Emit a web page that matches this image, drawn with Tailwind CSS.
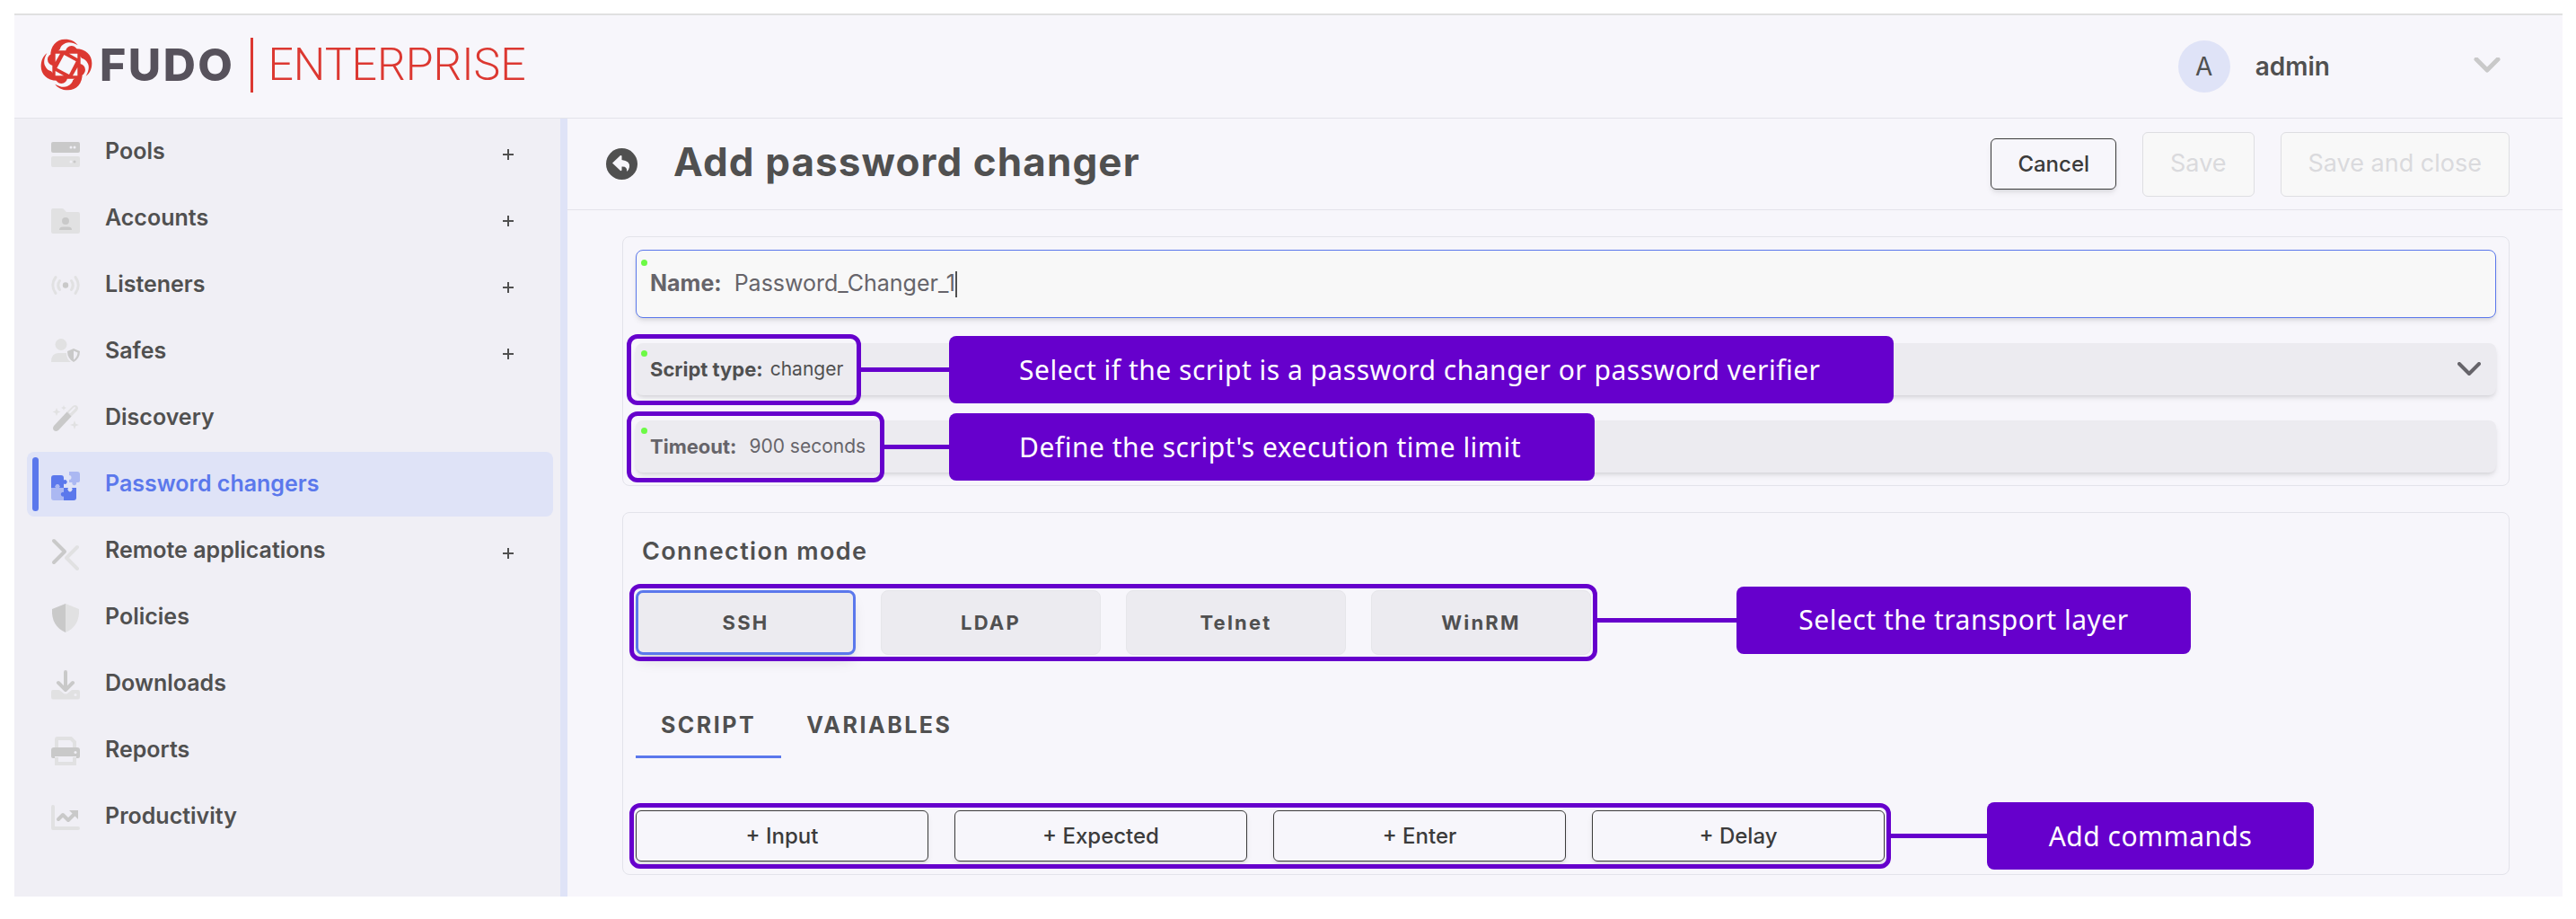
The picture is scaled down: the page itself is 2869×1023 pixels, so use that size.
<!DOCTYPE html>
<html lang="en">
<head>
  <meta charset="UTF-8">
  <meta name="viewport" content="width=device-width, initial-scale=1.0">
  <title>Add password changer</title>
  <script src="https://cdn.jsdelivr.net/npm/@tailwindcss/browser@4"></script>
</head>
<body class="bg-white px-4 pt-[15px] pr-[15px] font-['Inter','Liberation_Sans',sans-serif] text-[#505050]">

  <div class="flex flex-col border-t-2 border-[#e0e0e0] bg-[#f7f6fb]">

    <!-- Top bar -->
    <header class="flex h-[115px] items-center justify-between border-b border-[#e3e3ea] pr-[69px] pl-[29px]">
      <a href="#" class="flex items-center pb-1">
        <svg class="h-[58px] w-[58px]" viewBox="14 18 174 174" fill="#dc3831">
          <g id="petal">
            <path d="M48 78C46 42 68 20 96 20C116 20 131 28 139 40C124 31 109 28 98 33C86 38 81 46 79 54L60 70Z"/>
            <circle cx="118" cy="62" r="20"/>
          </g>
          <use href="#petal" transform="rotate(90 101 105)"/>
          <use href="#petal" transform="rotate(180 101 105)"/>
          <use href="#petal" transform="rotate(270 101 105)"/>
          <rect x="54" y="58" width="94" height="94" rx="18"/>
          <g fill="#f7f6fb">
            <path d="M93 72L133 94L110 138L69 116Z"/>
            <path d="M64 68H80L64 96Z"/>
            <path d="M138 68V84L110 68Z"/>
            <path d="M138 142H122L138 114Z"/>
            <path d="M64 142V126L92 142Z"/>
          </g>
        </svg>
        <span class="ml-2 text-[50px] leading-none font-extrabold tracking-wider text-[#57525c]">FUDO</span>
        <span class="ml-[18px] h-[61px] w-[3px] bg-[#dc3831]"></span>
        <span class="ml-4 font-['Roboto'] text-[50px] leading-none font-light text-[#dc3831]">ENTERPRISE</span>
      </a>
      <button type="button" class="flex items-center">
        <span class="flex h-[58px] w-[58px] items-center justify-center rounded-full bg-[#dfe3f7] text-[28px]">A</span>
        <span class="ml-7 text-[28px] font-semibold">admin</span>
        <svg class="ml-40 h-5 w-[30px]" viewBox="0 0 30 20" fill="none" stroke="#c9c9c9" stroke-width="5" stroke-linecap="round" stroke-linejoin="round"><path d="M3 2L15 14L27 2"/></svg>
      </button>
    </header>

    <div class="flex">
      <!-- Sidebar -->
      <nav class="flex w-[616px] shrink-0 flex-col gap-0.5 border-r-8 border-[#dfe3f7] bg-[#f0eff5] pt-px pr-2 pb-[52px] pl-3.5 text-[25px] font-semibold">
        <a href="#" class="flex h-[72px] items-center rounded-lg pr-11 pl-[27px]">
          <svg class="h-9 w-8 overflow-visible" viewBox="0 0 32 36"><rect y="7" width="32" height="12" rx="2" fill="#c9c9c9"/><rect y="23" width="32" height="12" rx="2" fill="#e1e1e2"/><g fill="#f0eff5"><circle cx="22" cy="13" r="1.5"/><circle cx="26" cy="13" r="1.5"/><circle cx="22" cy="29" r="1.5"/></g><circle cx="26" cy="29" r="1.5" fill="#c9c9c9"/></svg>
          <span class="ml-7">Pools</span>
          <svg class="mt-1.5 ml-auto h-3 w-3" viewBox="0 0 12 12" stroke="#505050" stroke-width="2"><path d="M6 0V12M0 6H12"/></svg>
        </a>
        <a href="#" class="flex h-[72px] items-center rounded-lg pr-11 pl-[27px]">
          <svg class="h-9 w-8 overflow-visible" viewBox="0 0 32 36"><path d="M2 7H12Q14 7 15 9L17 11H30Q32 11 32 13V33Q32 35 30 35H2Q0 35 0 33V9Q0 7 2 7Z" fill="#e1e1e2"/><circle cx="16" cy="21" r="4" fill="#c9c9c9"/><path d="M9 31Q9 27.500 13 27.500H19Q23 27.500 23 31Z" fill="#c9c9c9"/></svg>
          <span class="ml-7">Accounts</span>
          <svg class="mt-1.5 ml-auto h-3 w-3" viewBox="0 0 12 12" stroke="#505050" stroke-width="2"><path d="M6 0V12M0 6H12"/></svg>
        </a>
        <a href="#" class="flex h-[72px] items-center rounded-lg pr-11 pl-[27px]">
          <svg class="h-9 w-8 overflow-visible" viewBox="0 0 32 36" fill="none" stroke="#e1e1e2" stroke-width="3" stroke-linecap="round"><path d="M5 9.500Q-1.500 18.500 5 27.500M27 9.500Q33.500 18.500 27 27.500M9.500 13.500Q6 18.500 9.500 23.500M22.500 13.500Q26 18.500 22.500 23.500"/><circle cx="16" cy="18.500" r="3.200" fill="#c9c9c9" stroke="none"/></svg>
          <span class="ml-7">Listeners</span>
          <svg class="mt-1.5 ml-auto h-3 w-3" viewBox="0 0 12 12" stroke="#505050" stroke-width="2"><path d="M6 0V12M0 6H12"/></svg>
        </a>
        <a href="#" class="flex h-[72px] items-center rounded-lg pr-11 pl-[27px]">
          <svg class="h-9 w-8 overflow-visible" viewBox="0 0 32 36"><circle cx="11" cy="10.500" r="6.500" fill="#e1e1e2"/><path d="M0 30Q0 20 8 20H17Q17 27 22 30Z" fill="#e1e1e2"/><path d="M25 15L32 18Q32 26 25 30Q18 26 18 18Z" fill="#c9c9c9"/><path d="M25 17.500L29.500 19.500Q29 25 25 27.500Z" fill="#f0eff5"/></svg>
          <span class="ml-7">Safes</span>
          <svg class="mt-1.5 ml-auto h-3 w-3" viewBox="0 0 12 12" stroke="#505050" stroke-width="2"><path d="M6 0V12M0 6H12"/></svg>
        </a>
        <a href="#" class="flex h-[72px] items-center rounded-lg pr-11 pl-[27px]">
          <svg class="h-9 w-8 overflow-visible" viewBox="0 0 32 36"><path d="M17 12L24 5Q27 3 29 5Q31 7 29 10L22 17L17 20Z" fill="#e1e1e2"/><path d="M21 12L26 7" stroke="#f0eff5" stroke-width="2" stroke-linecap="round"/><path d="M17.500 11.500L22.500 16.500L8 32Q5 34 3 32Q1 30 3 27Z" fill="#c9c9c9"/><path d="M6 7L7.300 10.200L10.500 11.500L7.300 12.800L6 16L4.700 12.800L1.500 11.500L4.700 10.200ZM14 4L14.800 6L17 7L14.800 8L14 10L13.200 8L11 7L13.200 6ZM26 21L27.300 24.700L31 26L27.300 27.300L26 31L24.700 27.300L21 26L24.700 24.700Z" fill="#e1e1e2"/></svg>
          <span class="ml-7">Discovery</span>
        </a>
        <a href="#" class="relative flex h-[72px] items-center rounded-lg bg-[#dfe3f7] pr-11 pl-[27px] text-[#5b78ec]">
          <span class="absolute inset-y-1.5 left-1.5 w-[7px] rounded-full bg-[#5b78ec]"></span>
          <svg class="h-9 w-8 overflow-visible" viewBox="0 0 32 36"><path d="M2 22H14V36H3Q0 36 0 33V22Z" fill="#abb8f2"/><path d="M3 8H11Q14 8 14 11V13.500A2.400 2.400 0 1 1 14 17.500V22H9A2.400 2.400 0 1 0 5 22H0V11Q0 8 3 8Z" fill="#5b78ec"/><path d="M5 22A2.400 2.400 0 1 1 9 22Z" fill="#abb8f2"/><path d="M14 22H19A2.600 2.600 0 1 0 23 22H28V33Q28 36 25 36H14V31.500A2.400 2.400 0 1 1 14 27Z" fill="#5b78ec"/><path d="M20 4H29Q32 4 32 7V14Q32 16 30 16H28A2.400 2.400 0 1 1 23.500 16H20V13A2.400 2.400 0 1 0 20 8Z" fill="#abb8f2"/></svg>
          <span class="ml-7">Password changers</span>
        </a>
        <a href="#" class="flex h-[72px] items-center rounded-lg pr-11 pl-[27px]">
          <svg class="h-9 w-8 overflow-visible" viewBox="0 0 32 36" fill="none" stroke-width="4" stroke-linecap="round" stroke-linejoin="round"><path d="M29 14L17 26L29 38" stroke="#e1e1e2"/><path d="M3 7L15 19L3 31" stroke="#c9c9c9"/></svg>
          <span class="ml-7">Remote applications</span>
          <svg class="mt-1.5 ml-auto h-3 w-3" viewBox="0 0 12 12" stroke="#505050" stroke-width="2"><path d="M6 0V12M0 6H12"/></svg>
        </a>
        <a href="#" class="flex h-[72px] items-center rounded-lg pr-11 pl-[27px]">
          <svg class="h-9 w-8 overflow-visible" viewBox="0 0 32 36"><path d="M16 3L1 9Q0 28 16 35Z" fill="#c9c9c9"/><path d="M16 3L31 9Q32 28 16 35Z" fill="#e1e1e2"/></svg>
          <span class="ml-7">Policies</span>
        </a>
        <a href="#" class="flex h-[72px] items-center rounded-lg pr-11 pl-[27px]">
          <svg class="h-9 w-8 overflow-visible" viewBox="0 0 32 36"><path d="M2 25H9L14 29Q16 30 18 29L23 25H30Q32 25 32 27V33Q32 35.500 30 35.500H2Q0 35.500 0 33V27Q0 25 2 25Z" fill="#e1e1e2"/><circle cx="27" cy="30.500" r="1.500" fill="#f0eff5"/><path d="M16 5V24M8 17L16 25L24 17" fill="none" stroke="#c9c9c9" stroke-width="4" stroke-linecap="round" stroke-linejoin="round"/></svg>
          <span class="ml-7">Downloads</span>
        </a>
        <a href="#" class="flex h-[72px] items-center rounded-lg pr-11 pl-[27px]">
          <svg class="h-9 w-8 overflow-visible" viewBox="0 0 32 36"><path d="M6 16V6Q6 5 7 5H22L26 9V16M6 26V33H26V26" fill="none" stroke="#e1e1e2" stroke-width="4"/><path d="M3 15H29Q32 15 32 18V25Q32 27 30 27H28V25H4V27H2Q0 27 0 25V18Q0 15 3 15Z" fill="#c9c9c9"/><circle cx="27" cy="20.500" r="1.500" fill="#f0eff5"/></svg>
          <span class="ml-7">Reports</span>
        </a>
        <a href="#" class="flex h-[72px] items-center rounded-lg pr-11 pl-[27px]">
          <svg class="h-9 w-8 overflow-visible" viewBox="0 0 32 36" fill="none" stroke-width="4" stroke-linecap="round" stroke-linejoin="round"><path d="M2 7V31H30" stroke="#e1e1e2"/><path d="M8 21L13 16L19 22L26 15" stroke="#c9c9c9"/><path d="M20 11H30V21Z" fill="#c9c9c9"/></svg>
          <span class="ml-7">Productivity</span>
        </a>
      </nav>

      <main class="min-w-0 flex-1">
        <!-- Page title and actions -->
        <div class="flex h-[102px] items-center border-b border-[#e3e3ea] pr-[59px] pl-[43px]">
          <button type="button" aria-label="Back">
            <svg class="h-[35px] w-[35px]" viewBox="0 0 35 35"><circle cx="17.500" cy="17.500" r="17.500" fill="#505050"/><path d="M7 16.500L16 8Q17.500 7.500 17.500 9V13Q27 14 26 21Q25.500 24 23 26Q24 20 17.500 20.500V24Q17.500 25.500 16 25Z" fill="#f7f6fb"/></svg>
          </button>
          <h1 class="ml-10 pb-1.5 text-[44px] font-bold tracking-wide">Add password changer</h1>
          <div class="ml-auto flex items-center gap-[29px]">
            <button type="button" class="h-[57px] rounded-md border border-[#3b3b3b] px-[29px] text-2xl font-medium text-[#3b3b3b] shadow-md">Cancel</button>
            <button type="button" disabled class="h-[72px] rounded-md border border-[#dedee2] bg-[#f8f8f8] px-[30px] text-[27px] text-[#dadadd]">Save</button>
            <button type="button" disabled class="h-[72px] rounded-md border border-[#dedee2] bg-[#f8f8f8] px-[30px] text-[27px] text-[#dadadd]">Save and close</button>
          </div>
        </div>

        <div class="flex flex-col gap-[29px] pt-[29px] pr-[59px] pb-6 pl-[61px]">

          <!-- General settings -->
          <section class="flex flex-col gap-7 rounded-lg border border-[#e3e3ea] p-3.5">
            <div class="relative flex h-[76px] items-center rounded-lg border border-[#5b78ec] bg-[#f8f8f8] px-[15px] text-[25px] text-[#66646a] shadow-md">
              <span class="absolute top-2.5 left-[5px] h-[7px] w-[7px] rounded-full bg-[#6cfa45]"></span>
              <label for="name" class="font-bold">Name:</label>
              <input id="name" type="text" value="Password_Changer_1" class="ml-3.5 field-sizing-content outline-none">
              <span class="h-[29px] w-0.5 bg-[#505050]"></span>
            </div>

            <div class="relative flex h-[58px] items-center rounded-lg bg-[#ecebf0] px-4 text-[22px] shadow-md">
              <span class="absolute top-2 left-1.5 h-[7px] w-[7px] rounded-full bg-[#6cfa45]"></span>
              <label for="script-type" class="font-bold">Script type:</label>
              <select id="script-type" class="ml-2 flex-1 appearance-none text-[21px] outline-none">
                <option>changer</option>
                <option>verifier</option>
              </select>
              <svg class="mr-px h-4 w-[26px]" viewBox="0 0 26 16" fill="none" stroke="#66646a" stroke-width="4" stroke-linecap="round" stroke-linejoin="round"><path d="M2 2L13 13L24 2"/></svg>
              <div class="absolute -top-2.5 -left-2.5 flex items-center">
                <span class="h-[79px] w-[261px] rounded-xl border-5 border-[#6600cc]"></span>
                <span class="h-[5px] w-[98px] bg-[#6600cc]"></span>
                <span class="flex h-[75px] w-[1052px] items-center rounded-lg bg-[#6600cc] pl-[78px] font-['Noto_Sans'] text-3xl tracking-[0.5px] text-white">Select if the script is a password changer or password verifier</span>
              </div>
            </div>

            <div class="relative flex h-[58px] items-center rounded-lg bg-[#ecebf0] px-4 text-[22px] text-[#66646a] shadow-md">
              <span class="absolute top-2 left-1.5 h-[7px] w-[7px] rounded-full bg-[#6cfa45]"></span>
              <label for="timeout" class="font-bold">Timeout:</label>
              <input id="timeout" type="text" value="900 seconds" class="ml-3.5 flex-1 text-[21px] outline-none">
              <div class="absolute -top-2.5 -left-2.5 flex items-center">
                <span class="h-[79px] w-[287px] rounded-xl border-5 border-[#6600cc]"></span>
                <span class="h-[5px] w-[72px] bg-[#6600cc]"></span>
                <span class="flex h-[75px] w-[719px] items-center rounded-lg bg-[#6600cc] pl-[78px] font-['Noto_Sans'] text-3xl tracking-[0.5px] text-white">Define the script's execution time limit</span>
              </div>
            </div>
          </section>

          <!-- Connection mode and script commands -->
          <section class="rounded-lg border border-[#e3e3ea] px-3.5 pt-[25px] pb-3.5">
            <h2 class="ml-[7px] text-[27px] leading-9 font-semibold tracking-wider">Connection mode</h2>

            <div class="relative mt-[25px] flex w-fit gap-7 text-[22px] font-bold tracking-widest">
              <button type="button" class="h-[72px] w-[245px] rounded-lg border-3 border-[#5b78ec] bg-[#ecebf0] shadow-lg">SSH</button>
              <button type="button" class="h-[72px] w-[245px] rounded-lg border border-[#e6e6ea] bg-[#ecebf0]">LDAP</button>
              <button type="button" class="h-[72px] w-[245px] rounded-lg border border-[#e6e6ea] bg-[#ecebf0]">Telnet</button>
              <button type="button" class="h-[72px] w-[245px] rounded-lg border border-[#e6e6ea] bg-[#ecebf0]">WinRM</button>
              <div class="pointer-events-none absolute -inset-[7px] rounded-xl border-5 border-[#6600cc]">
                <div class="absolute inset-y-0 left-full flex items-center pb-1.5">
                  <span class="h-[5px] w-40 bg-[#6600cc]"></span>
                  <span class="flex h-[75px] w-[506px] items-center justify-center rounded-lg bg-[#6600cc] font-['Noto_Sans'] text-3xl font-normal tracking-[0.5px] text-white">Select the transport layer</span>
                </div>
              </div>
            </div>

            <div role="tablist" class="mt-[37px] flex text-[25px] font-bold tracking-widest">
              <button type="button" role="tab" aria-selected="true" class="h-[78px] border-b-3 border-[#5b78ec] px-7 pt-2">SCRIPT</button>
              <button type="button" role="tab" aria-selected="false" class="h-[78px] border-b-3 border-transparent px-7 pt-2">VARIABLES</button>
            </div>

            <div class="relative mt-[58px] flex w-fit gap-[29px] text-2xl font-medium text-[#3b3b3b]">
              <button type="button" class="h-[57px] w-[326px] rounded-md border border-[#3b3b3b] shadow-md">+ Input</button>
              <button type="button" class="h-[57px] w-[326px] rounded-md border border-[#3b3b3b] shadow-md">+ Expected</button>
              <button type="button" class="h-[57px] w-[326px] rounded-md border border-[#3b3b3b] shadow-md">+ Enter</button>
              <button type="button" class="h-[57px] w-[326px] rounded-md border border-[#3b3b3b] shadow-md">+ Delay</button>
              <div class="pointer-events-none absolute -inset-x-[7px] -inset-y-2 rounded-xl border-5 border-[#6600cc]">
                <div class="absolute inset-y-0 left-full flex items-center">
                  <span class="h-[5px] w-28 bg-[#6600cc]"></span>
                  <span class="flex h-[75px] w-[364px] items-center justify-center rounded-lg bg-[#6600cc] font-['Noto_Sans'] text-3xl font-normal tracking-[0.5px] text-white">Add commands</span>
                </div>
              </div>
            </div>
          </section>
        </div>
      </main>
    </div>
  </div>

</body>
</html>
